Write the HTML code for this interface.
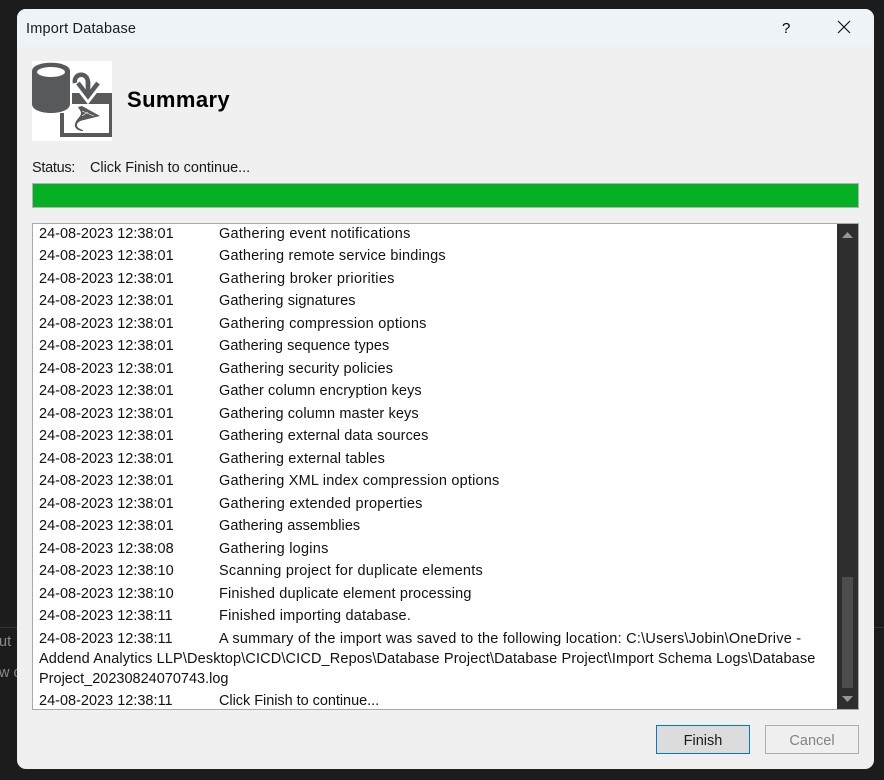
<!DOCTYPE html>
<html lang="en"><head><meta charset="utf-8"><title>Import Database</title>
<style>
html,body{margin:0;padding:0;width:884px;height:780px;overflow:hidden;background:#1c1c1c;font-family:"Liberation Sans",sans-serif;font-size:14.5px;color:#000}
.a{position:absolute;white-space:nowrap;line-height:20px}
#d{position:absolute;left:17px;top:9px;width:857px;height:760px;background:#f0f0f0;border-radius:9px;overflow:hidden}
#t{position:absolute;left:0;top:0;width:857px;height:37px;background:#eef3f8}
#list{position:absolute;left:32px;top:223px;width:825px;height:485px;background:#fff;border:1px solid #a9a9a9;overflow:hidden}
#list div{position:absolute;left:6px;white-space:nowrap;line-height:20px;color:#111}
#list i{position:absolute;left:180px;top:0;font-style:normal}
</style></head><body>
<div style="position:absolute;left:0;top:627px;width:17px;height:1px;background:#333"></div>
<div style="position:absolute;left:874px;top:627px;width:10px;height:1px;background:#333"></div>
<div class="a" style="left:-1px;top:632px;color:#8a8a8a">ut</div>
<div class="a" style="left:-1px;top:663px;color:#8a8a8a">w c</div>
<div id="d"><div id="t"></div></div>
<div class="a" style="left:26px;top:19px;color:#1a1a1a;letter-spacing:.2px">Import Database</div>
<div class="a" style="left:782px;top:19px;font-size:15px">?</div>
<svg style="position:absolute;left:836px;top:19px" width="16" height="16"><path d="M2 2L14 14M14 2L2 14" stroke="#111" stroke-width="1.2" fill="none"/></svg>
<svg style="position:absolute;left:32px;top:61px" width="80" height="80" viewBox="0 0 80 80">
<rect width="80" height="80" fill="#fff"/>
<path d="M0 10C0 -1 38 -1 38 10V43C38 55 0 55 0 43Z" fill="#58595b"/>
<ellipse cx="19" cy="11" rx="14" ry="5" fill="#fff"/>
<path d="M40 32H80V43H40Z" fill="#58595b"/>
<path d="M28 52H32V72H77V43H80V76H28Z" fill="#58595b"/>
<path d="M43 22C41 12 56 10 56 22V34" fill="none" stroke="#58595b" stroke-width="4.5"/>
<path d="M46 23L56 36L66 23" fill="none" stroke="#fff" stroke-width="9"/>
<path d="M56 20V32" stroke="#58595b" stroke-width="4.5"/>
<path d="M46 22L56 35L66 22" fill="none" stroke="#58595b" stroke-width="4.5"/>
<path d="M46 46L50 45L68 55L52 59C47 60 45 62 45 64C45 67 48 68 51 69L51 70C46 70 42 67 43 63C44 58 49 56 49 52C49 50 47 48 46 46Z" fill="#58595b"/>
<path d="M50 50L62 55M50 55L56 51" stroke="#fff" stroke-width=".6" fill="none"/>
</svg>
<div class="a" style="left:127px;top:87px;font-size:22px;font-weight:bold;line-height:26px;letter-spacing:.4px">Summary</div>
<div class="a" style="left:32px;top:158px;color:#1a1a1a;letter-spacing:-.3px">Status:</div>
<div class="a" style="left:90px;top:158px;color:#1a1a1a;letter-spacing:-.04px">Click Finish to continue...</div>
<div style="position:absolute;left:32px;top:183px;width:825px;height:23px;background:#06b025;border:1px solid #b2b2b2"></div>
<div id="list">
<div style="top:0">24-08-2023 12:38:01<i style="letter-spacing:.27px">Gathering event notifications</i></div>
<div style="top:22px">24-08-2023 12:38:01<i style="letter-spacing:.18px">Gathering remote service bindings</i></div>
<div style="top:45px">24-08-2023 12:38:01<i style="letter-spacing:.3px">Gathering broker priorities</i></div>
<div style="top:67px">24-08-2023 12:38:01<i style="letter-spacing:.1px">Gathering signatures</i></div>
<div style="top:90px">24-08-2023 12:38:01<i style="letter-spacing:.24px">Gathering compression options</i></div>
<div style="top:112px">24-08-2023 12:38:01<i style="letter-spacing:.04px">Gathering sequence types</i></div>
<div style="top:135px">24-08-2023 12:38:01<i style="letter-spacing:.15px">Gathering security policies</i></div>
<div style="top:157px">24-08-2023 12:38:01<i style="letter-spacing:.1px">Gather column encryption keys</i></div>
<div style="top:180px">24-08-2023 12:38:01<i style="letter-spacing:.11px">Gathering column master keys</i></div>
<div style="top:202px">24-08-2023 12:38:01<i style="letter-spacing:.1px">Gathering external data sources</i></div>
<div style="top:225px">24-08-2023 12:38:01<i style="letter-spacing:.16px">Gathering external tables</i></div>
<div style="top:247px">24-08-2023 12:38:01<i style="letter-spacing:.2px">Gathering XML index compression options</i></div>
<div style="top:270px">24-08-2023 12:38:01<i style="letter-spacing:.27px">Gathering extended properties</i></div>
<div style="top:292px">24-08-2023 12:38:01<i style="letter-spacing:.05px">Gathering assemblies</i></div>
<div style="top:315px">24-08-2023 12:38:08<i style="letter-spacing:.25px">Gathering logins</i></div>
<div style="top:337px">24-08-2023 12:38:10<i style="letter-spacing:.26px">Scanning project for duplicate elements</i></div>
<div style="top:360px">24-08-2023 12:38:10<i style="letter-spacing:.16px">Finished duplicate element processing</i></div>
<div style="top:382px">24-08-2023 12:38:11<i style="letter-spacing:.21px">Finished importing database.</i></div>
<div style="top:405px">24-08-2023 12:38:11<i style="letter-spacing:.24px">A summary of the import was saved to the following location: C:\Users\Jobin\OneDrive -</i></div>
<div style="top:425px;letter-spacing:.14px">Addend Analytics LLP\Desktop\CICD\CICD_Repos\Database Project\Database Project\Import Schema Logs\Database</div>
<div style="top:445px">Project_20230824070743.log</div>
<div style="top:467px">24-08-2023 12:38:11<i style="letter-spacing:-.04px">Click Finish to continue...</i></div>
<div style="left:804px;top:0;width:21px;height:485px;background:#2e2e2e"></div>
<div style="left:809px;top:353px;width:11px;height:111px;background:#4d4d4d"></div>
</div>
<svg style="position:absolute;left:837px;top:227px" width="21" height="14"><path d="M5 11L10.5 5L16 11Z" fill="#959595"/></svg>
<svg style="position:absolute;left:837px;top:693px" width="21" height="14"><path d="M5 3L10.5 9L16 3Z" fill="#959595"/></svg>
<div class="a" style="left:656px;top:725px;border:1px solid #0078d7;width:92px;height:27px;background:#dcdcdc;text-align:center;line-height:30px;color:#1a1a1a">Finish</div>
<div class="a" style="left:765px;top:725px;width:92px;height:27px;border:1px solid #adadad;background:#f0f0f0;text-align:center;line-height:30px;color:#838383">Cancel</div>
</body></html>
